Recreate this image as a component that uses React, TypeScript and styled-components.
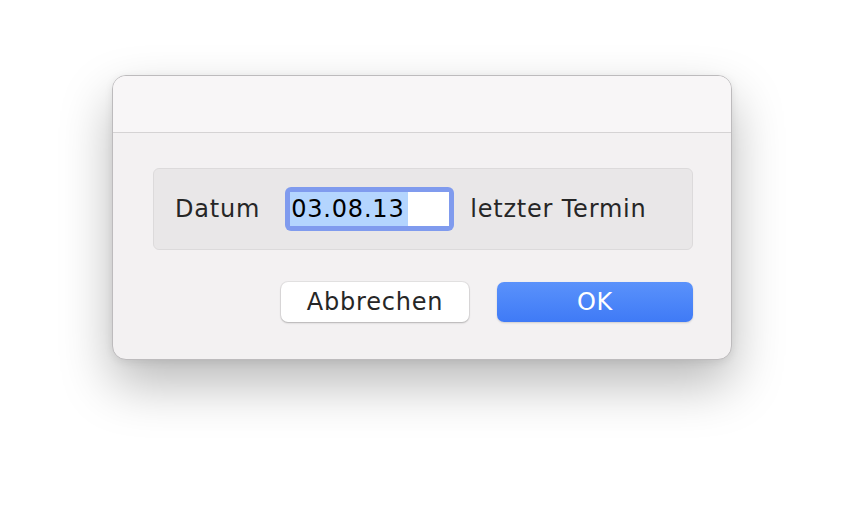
import { FC } from 'react';
import styled, { createGlobalStyle } from 'styled-components';

const GlobalStyle = createGlobalStyle`
  html, body {
    margin: 0;
    padding: 0;
    background: #ffffff;
  }
  body {
    font-family: 'DejaVu Sans', 'Liberation Sans', sans-serif;
  }
`;

const App: FC = () => {
  return (
    <>
      <GlobalStyle />
      <Page>
        <Window>
          <TitleBar />
          <Body>
            <GroupBox>
              <Label>Datum</Label>
              <FieldRing>
                <Field>
                  <Selection>03.08.13</Selection>
                </Field>
              </FieldRing>
              <Label>letzter Termin</Label>
            </GroupBox>
            <ButtonRow>
              <Button>Abbrechen</Button>
              <Button primary>OK</Button>
            </ButtonRow>
          </Body>
        </Window>
      </Page>
    </>
  );
};

// Styles
const Page = styled.div`
  width: 844px;
  height: 508px;
  display: flex;
  justify-content: center;
  align-items: flex-start;
  padding-top: 75px;
  box-sizing: border-box;
`;

const Window = styled.div`
  width: 620px;
  height: 285px;
  box-sizing: border-box;
  border-radius: 14px;
  background: #f3f1f2;
  border: 1px solid #bdbbbd;
  box-shadow: 0 24px 52px rgba(0, 0, 0, 0.28), 0 2px 8px rgba(0, 0, 0, 0.08);
  overflow: hidden;
  display: flex;
  flex-direction: column;
`;

const TitleBar = styled.div`
  height: 56px;
  flex-shrink: 0;
  background: #f8f6f7;
  border-bottom: 1px solid #d5d3d4;
`;

const Body = styled.div`
  flex: 1;
  display: flex;
  flex-direction: column;
  padding: 35px 38px 0 40px;
`;

const GroupBox = styled.div`
  height: 82px;
  box-sizing: border-box;
  display: flex;
  align-items: center;
  padding-left: 21px;
  background: #e9e7e8;
  border: 1px solid #dcdadb;
  border-radius: 6px;
`;

const Label = styled.span`
  font-size: 24px;
  color: #262626;
  letter-spacing: 0.8px;
`;

const FieldRing = styled.div`
  margin: 0 16px 0 25px;
  padding: 5px;
  border-radius: 6px;
  background: #809bee;
`;

const Field = styled.div`
  width: 159px;
  height: 34px;
  background: #ffffff;
  display: flex;
  align-items: center;
`;

const Selection = styled.span`
  background: #b4d5fe;
  color: #000000;
  font-size: 24px;
  line-height: 34px;
  padding-left: 1px;
  padding-right: 4px;
  letter-spacing: 0.8px;
`;

const ButtonRow = styled.div`
  display: flex;
  justify-content: flex-end;
  gap: 28px;
  margin-top: 32px;
`;

const Button = styled.button<{ primary?: boolean }>`
  height: 40px;
  width: ${(p) => (p.primary ? '196px' : '188px')};
  border: none;
  border-radius: 7px;
  font-family: 'DejaVu Sans', 'Liberation Sans', sans-serif;
  font-size: 24px;
  letter-spacing: 0.8px;
  color: ${(p) => (p.primary ? '#ffffff' : '#262626')};
  background: ${(p) =>
    p.primary ? 'linear-gradient(#5a92fb, #3f7af6)' : '#ffffff'};
  box-shadow: ${(p) =>
    p.primary
      ? '0 1px 2px rgba(0, 0, 0, 0.15)'
      : '0 0 0 1px rgba(0, 0, 0, 0.06), 0 1px 2px rgba(0, 0, 0, 0.22)'};
  padding: 0;
  cursor: default;
`;

export default App;
